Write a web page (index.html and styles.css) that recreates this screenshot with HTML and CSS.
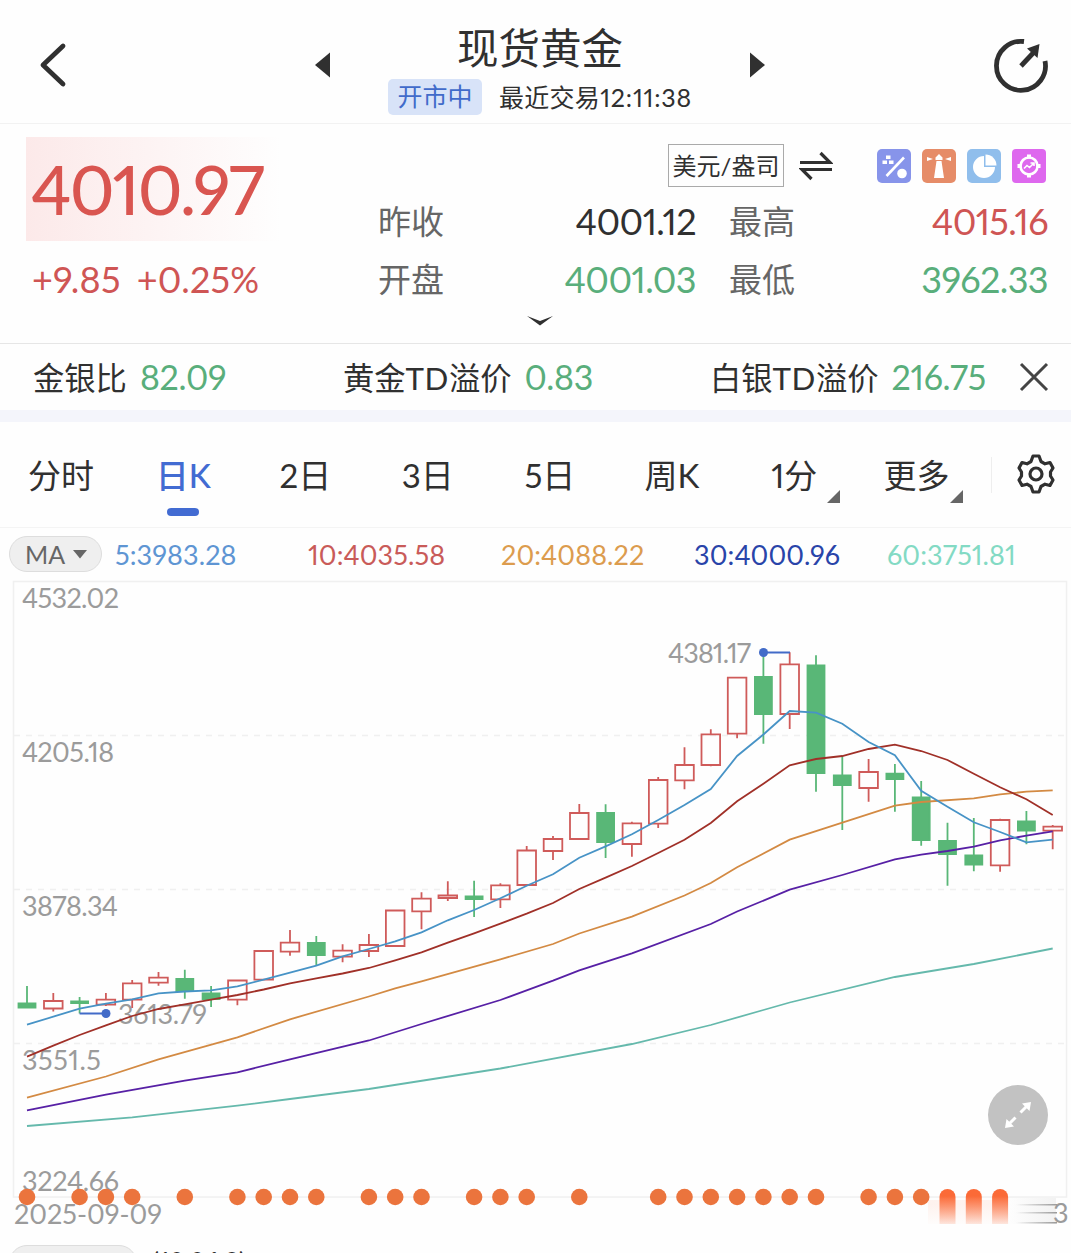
FILE: index.html
```html
<!DOCTYPE html>
<html lang="zh-CN">
<head>
    <meta charset="UTF-8">
    <meta name="viewport" content="width=device-width, initial-scale=1.0">
    <title>现货黄金</title>
    <link rel="stylesheet" href="styles.css">
</head>
<body>
    <header class="header">
        <svg class="back" width="30" height="48" viewBox="0 0 30 48"><path d="M25 5 L5 24 L25 43"/></svg>
        <svg class="arrow" width="16" height="26" viewBox="0 0 16 26"><path d="M16 0.500 V25.500 L1 13 Z"/></svg>
        <div class="title-box">
            <h1>现货黄金</h1>
            <div class="status">
                <span class="badge">开市中</span>
                <span class="last-time">最近交易<span class="clock">12:11:38</span></span>
            </div>
        </div>
        <svg class="arrow" width="16" height="26" viewBox="0 0 16 26"><path d="M0 0.500 V25.500 L15 13 Z"/></svg>
        <svg class="share" width="56" height="56" viewBox="0 0 56 56">
            <path class="ring" d="M31 4.500 A24.500 24.500 0 1 0 52 24"/>
            <path class="ring" d="M28 29 L42 14"/>
            <path class="tip" d="M46.500 7 L34 11.500 L44.500 21 Z"/>
        </svg>
    </header>

    <section class="quote">
        <div class="price-box">
            <div class="price">4010.97</div>
            <div class="change"><span>+9.85</span><span>+0.25%</span></div>
        </div>
        <div class="detail">
            <div class="tools">
                <span class="unit">美元/盎司</span>
                <svg class="swap" width="34" height="30" viewBox="0 0 34 30"><path d="M1 11.500 H31 L21.500 2 M33 18.500 H3 L12.500 28"/></svg>
                <div class="icons">
                    <svg width="34" height="34" viewBox="0 0 34 34">
                        <rect width="34" height="34" rx="5" fill="#8794ea"/>
                        <path d="M9.500 27 L27 8.500" stroke="#fff" stroke-width="2.600"/>
                        <circle cx="25" cy="24.500" r="4.800" fill="#fff"/>
                        <path d="M9 6.500h4.500v3.500H9z M5.500 11.500h4.500v3.500H5.500z M12 11.500h4.500v3.500H12z" fill="#fff"/>
                    </svg>
                    <svg width="34" height="34" viewBox="0 0 34 34">
                        <rect width="34" height="34" rx="5" fill="#e68c68"/>
                        <path d="M14.500 12 H19.500 L22 29 H12 Z M17 5 L20.500 8.500 V11 H13.500 V8.500 Z M5 8 L11 10 L5 12 Z M29 8 L23 10 L29 12 Z" fill="#fff"/>
                    </svg>
                    <svg width="34" height="34" viewBox="0 0 34 34">
                        <rect width="34" height="34" rx="5" fill="#90beec"/>
                        <path d="M17 7 A11 11 0 1 0 28 18 H17 Z" fill="#fff"/>
                        <path d="M18.500 5.500 A11 11 0 0 1 29.500 16.500 H18.500 Z" fill="#fff"/>
                    </svg>
                    <svg width="34" height="34" viewBox="0 0 34 34">
                        <rect width="34" height="34" rx="4" fill="#de68ee"/>
                        <circle cx="17" cy="17" r="8.500" fill="none" stroke="#fff" stroke-width="2.600"/>
                        <path d="M17 5.500v4 M17 24.500v4 M5.500 17h4 M24.500 17h4" stroke="#fff" stroke-width="4"/>
                        <path d="M12 19.500l3-3 2.500 2 4-4 M18.500 14h3.500v3" fill="none" stroke="#fff" stroke-width="1.600"/>
                    </svg>
                </div>
            </div>
            <div class="prices">
                <span class="label">昨收</span><span class="num">4001.12</span>
                <span class="label high">最高</span><span class="num red">4015.16</span>
                <span class="label">开盘</span><span class="num green">4001.03</span>
                <span class="label high">最低</span><span class="num green">3962.33</span>
            </div>
        </div>
        <svg class="more" width="28" height="12" viewBox="0 0 28 12"><path d="M1 1 L14 6 L27 1 L14 10.500 Z"/></svg>
    </section>

    <section class="ratios">
        <div class="ratio">金银比<span>82.09</span></div>
        <div class="ratio">黄金<i>TD</i>溢价<span>0.83</span></div>
        <div class="ratio">白银<i>TD</i>溢价<span>216.75</span></div>
        <svg class="close" width="30" height="30" viewBox="0 0 30 30"><path d="M2 2 L28 28 M28 2 L2 28"/></svg>
    </section>

    <nav class="tabs">
        <div class="tab">分时</div>
        <div class="tab active">日K</div>
        <div class="tab">2日</div>
        <div class="tab">3日</div>
        <div class="tab">5日</div>
        <div class="tab">周K</div>
        <div class="tab corner">1分</div>
        <div class="tab corner">更多</div>
        <div class="settings">
            <svg width="40" height="42" viewBox="0 0 40 42">
                <path d="M17 3 H23 L25 8.500 L29 10.800 L34 9.500 L37 15 L34.500 19 V23 L37 27 L34 32.500 L29 31.200 L25 33.500 L23 39 H17 L15 33.500 L11 31.200 L6 32.500 L3 27 L5.500 23 V19 L3 15 L6 9.500 L11 10.800 L15 8.500 Z"/>
                <circle cx="20" cy="21" r="6"/>
            </svg>
        </div>
    </nav>

    <div class="ma-bar">
        <div class="pill">MA<svg width="14" height="9" viewBox="0 0 14 9"><path d="M0 0 H14 L7 8.500 Z"/></svg></div>
        <div class="ma-list">
            <span class="ma5">5:3983.28</span>
            <span class="ma10">10:4035.58</span>
            <span class="ma20">20:4088.22</span>
            <span class="ma30">30:4000.96</span>
            <span class="ma60">60:3751.81</span>
        </div>
    </div>

    <main class="chart">
        <svg id="kline" width="1071" height="664" viewBox="0 580 1071 664">
            <defs>
                <linearGradient id="fadeDown" x1="0" y1="0" x2="0" y2="1">
                    <stop offset="0.2" stop-color="#fb6a37"/>
                    <stop offset="1" stop-color="#fb6a37" stop-opacity="0.15"/>
                </linearGradient>
                <linearGradient id="fadeRight" x1="0" y1="0" x2="1" y2="0">
                    <stop offset="0" stop-color="#999" stop-opacity="0"/>
                    <stop offset="1" stop-color="#999"/>
                </linearGradient>
            </defs>
        </svg>
        <button class="expand" aria-label="全屏">
            <svg width="30" height="30" viewBox="0 0 30 30">
                <path class="line" d="M17.500 12.500 L24 6 M12.500 17.500 L6 24"/>
                <path class="head" d="M28 2 L19 3.500 L26.500 11 Z M2 28 L3.500 19 L11 26.500 Z"/>
            </svg>
        </button>
    </main>

    <div class="sub-bar">
        <div class="sub-pill"></div>
        <span class="sub-params">(12,26,9)</span>
    </div>
    <script src="chart.js"></script>
</body>
</html>
```
FILE: styles.css
```css
* {
    box-sizing: border-box;
}

body {
    margin: 0;
    width: 1071px;
    height: 1253px;
    overflow: hidden;
    background: #fefefe;
    color: #303030;
    font-family: Lato, "Noto Sans CJK SC", sans-serif;
    font-variant-numeric: proportional-nums;
}

svg {
    display: block;
    flex: none;
}

/* Header */
.header {
    display: flex;
    align-items: center;
    height: 124px;
    padding: 6px 22px 0 38px;
    border-bottom: 1px solid #f2f2f2;
}

.back path,
.ring {
    fill: none;
    stroke: #303030;
    stroke-width: 4.8;
    stroke-linecap: round;
    stroke-linejoin: round;
}

.ring {
    stroke-linecap: butt;
}

.back {
    margin-right: 246px;
}

.arrow,
.tip,
.more {
    fill: #303030;
}

.title-box {
    width: 420px;
    padding-top: 3px;
    text-align: center;
}

.share {
    margin-left: auto;
}

h1 {
    margin: 0;
    font-size: 41.5px;
    font-weight: 400;
    line-height: 61px;
}

.status {
    display: flex;
    justify-content: center;
    align-items: center;
    gap: 17px;
    height: 36px;
    font-size: 25px;
}

.badge {
    width: 94px;
    height: 36px;
    line-height: 35px;
    border-radius: 5px;
    background: #d8e3f8;
    color: #416bca;
}

.last-time {
    line-height: 36px;
    letter-spacing: 0.3px;
}

.clock {
    letter-spacing: 0.8px;
}

/* Quote */
.quote {
    display: grid;
    grid-template-columns: 352px 1fr;
    grid-template-rows: 176px 1fr;
    height: 220px;
    padding: 13px 23px 0 26px;
    border-bottom: 1px solid #e6e6e6;
}

.price {
    width: 255px;
    height: 104px;
    padding-left: 5px;
    background: linear-gradient(90deg, #fce9e9, #fefefe);
    color: #d95550;
    font-size: 68px;
    font-weight: 500;
    line-height: 104px;
    letter-spacing: -2px;
}

.change {
    display: flex;
    gap: 16px;
    padding-left: 6px;
    color: #cf5554;
    font-size: 36px;
    line-height: 77px;
    letter-spacing: 0.2px;
}

.tools {
    display: flex;
    align-items: center;
    height: 57px;
    padding-left: 290px;
}

.unit {
    width: 116px;
    height: 43px;
    border: 1px solid #aaa;
    font-size: 24px;
    line-height: 41px;
    text-align: center;
    white-space: nowrap;
}

.swap {
    margin-left: 15px;
    fill: none;
    stroke: #303030;
    stroke-width: 3.2;
}

.icons {
    display: flex;
    gap: 11px;
    margin-left: auto;
    padding-right: 2px;
}

.prices {
    display: grid;
    grid-template-columns: 90px 228px 123px 1fr;
    grid-auto-rows: 58px;
    line-height: 54px;
}

.label {
    color: #666;
    font-size: 33px;
}

.high {
    padding-left: 33px;
}

.num {
    font-size: 36px;
    letter-spacing: -0.6px;
    text-align: right;
}

.red {
    color: #cf5554;
}

.green {
    color: #59ae7b;
}

.more {
    grid-column: 1 / 3;
    margin: 2px 0 0 500px;
}

/* Ratios */
.ratios {
    display: grid;
    grid-template-columns: 310px 367px 1fr 30px;
    align-items: center;
    height: 78px;
    padding: 0 22px 0 33px;
    border-bottom: 12px solid #f4f5fb;
}

.ratio {
    font-size: 31.3px;
    line-height: 64px;
    white-space: nowrap;
}

.ratio i {
    font-style: normal;
    letter-spacing: 0.5px;
}

.ratio span {
    margin-left: 13px;
    color: #59ae7b;
    font-size: 34px;
    letter-spacing: -0.3px;
}

.close {
    stroke: #444;
    stroke-width: 3;
}

/* Tabs */
.tabs {
    display: flex;
    height: 106px;
    border-bottom: 1px solid #f4f4f4;
}

.tab {
    position: relative;
    width: 122.2px;
    font-size: 33px;
    line-height: 107px;
    text-align: center;
}

.active {
    color: #426bd2;
    font-weight: 500;
}

.active::after {
    content: "";
    position: absolute;
    left: 45px;
    top: 86px;
    width: 32px;
    height: 8px;
    border-radius: 4px;
    background: #426bd2;
}

.corner::after {
    content: "";
    position: absolute;
    right: 15px;
    top: 68px;
    border-left: 13px solid transparent;
    border-bottom: 13px solid #666;
}

.settings {
    height: 36px;
    margin: 35px 0 0 13px;
    padding-left: 24px;
    border-left: 1px solid #eee;
}

.settings svg {
    margin-top: -4px;
    fill: none;
    stroke: #303030;
    stroke-width: 3.2;
    stroke-linejoin: round;
}

/* MA legend */
.ma-bar {
    display: flex;
    align-items: center;
    height: 52px;
    padding-left: 9px;
}

.pill {
    display: flex;
    flex: none;
    align-items: center;
    gap: 8px;
    width: 93px;
    height: 36px;
    padding-left: 15px;
    border: 1px solid #ddd;
    border-radius: 18px;
    background: #efefef;
    color: #666;
    font-size: 25px;
}

.pill svg {
    fill: #666;
}

.ma-list {
    display: grid;
    flex: none;
    grid-template-columns: repeat(5, 193px);
    margin-left: 13px;
    font-size: 27px;
    letter-spacing: 0.1px;
}

.ma5 { color: #5e95d3; }
.ma10 { color: #c95b59; }
.ma20 { color: #dc9c4e; }
.ma30 { color: #2944a9; }
.ma60 { color: #83dac4; }

/* Chart */
.chart {
    position: relative;
    height: 664px;
}

.frame {
    fill: none;
    stroke: #f0f0f0;
    stroke-width: 1.5;
}

.grid {
    stroke: #f0f0f0;
    stroke-width: 1.5;
    stroke-dasharray: 6 6;
}

.axis {
    fill: #9b9b9b;
    font-size: 27px;
}

.up {
    fill: none;
    stroke: #cf5b5a;
    stroke-width: 1.8;
}

.down {
    fill: #59b777;
    stroke: #59b777;
    stroke-width: 1.8;
}

.avg {
    fill: none;
    stroke-width: 1.8;
}

.line5 { stroke: #4793c6; }
.line10 { stroke: #a03028; }
.line20 { stroke: #d38a43; }
.line30 { stroke: #5720a5; }
.line60 { stroke: #65b9ac; }

.marker {
    fill: none;
    stroke: #426bc8;
    stroke-width: 1.8;
}

.marker-dot {
    fill: #426bc8;
}

.event {
    fill: #eb743d;
}

.expand {
    position: absolute;
    left: 988px;
    top: 505px;
    display: flex;
    align-items: center;
    justify-content: center;
    width: 60px;
    height: 60px;
    padding: 0;
    border: none;
    border-radius: 50%;
    background: #c2c2c2;
}

.expand .line {
    stroke: #fff;
    stroke-width: 3;
}

.expand .head {
    fill: #fff;
}

/* Next indicator, cut by the bottom of the screen */
.sub-bar {
    display: flex;
    height: 36px;
    padding: 1px 0 0 9px;
}

.sub-pill {
    width: 128px;
    height: 36px;
    border: 1px solid #ddd;
    border-radius: 18px;
    background: #efefef;
}

.sub-params {
    margin-left: 15px;
    font-size: 26px;
    line-height: 34px;
}
```
FILE: chart.js
```js
const svg = document.getElementById("kline");
const startX = 27;
const step = 26.3;

// [rising, high, body top, body bottom, low]
const candles = [
    [0, 986, 1003.5, 1007.5, 1008], [1, 993, 1001, 1008.5, 1011.5],
    [0, 997, 1001.5, 1003, 1013.5], [1, 993, 999.7, 1004.7, 1006],
    [1, 980, 983.3, 999.7, 1008], [1, 972, 977.7, 982.7, 985.7],
    [0, 969.7, 979, 991, 998.7], [0, 986, 993.5, 999, 1007],
    [1, 980, 980.5, 999.7, 1005.3], [1, 950.5, 951, 979.7, 980],
    [1, 930, 942.7, 951.7, 955.7], [0, 936, 943, 955, 965.7],
    [1, 944.3, 950.7, 956.7, 962.3], [1, 934, 945, 951, 957],
    [1, 910.5, 910.5, 946, 946], [1, 892.3, 898.7, 911.3, 929.3],
    [1, 881.3, 895.5, 898, 901], [0, 880.7, 896.5, 899, 917],
    [1, 883.3, 885.3, 899.3, 908], [1, 846, 850.5, 885, 886],
    [1, 836, 839, 851, 860], [1, 804, 813, 839, 840],
    [0, 804.3, 813, 842, 858], [1, 821.7, 823.3, 844, 856.7],
    [1, 777, 780, 823.7, 828], [1, 747.3, 765, 780.3, 789.3],
    [1, 729.3, 734.3, 765, 766.3], [1, 677, 677.7, 733.7, 738.3],
    [0, 653, 677, 714, 743.7], [1, 652.3, 664.3, 714, 729],
    [0, 655.3, 665.5, 773, 791.7], [0, 756, 775.5, 785, 830],
    [1, 759, 772, 788, 801.7], [0, 764, 773.7, 779, 811.7],
    [0, 781, 797.5, 840, 845.7], [0, 822.7, 841, 854, 885.7],
    [0, 818, 855.5, 864.5, 871.3], [1, 818.7, 820, 865.3, 871.7],
    [0, 811, 821.5, 830.5, 844.3], [1, 825, 826.7, 830.7, 849.3]
];

// index: y
const averages = {
    line60: {0: 1126, 4: 1117.3, 8: 1105.7, 10: 1099, 13: 1089, 18: 1068.5, 23: 1044, 26: 1025, 28: 1010, 29: 1002.5, 33: 977, 36: 964, 39: 948.5},
    line30: {0: 1110.3, 3: 1094.7, 6: 1080.7, 8: 1072.3, 10: 1059.3, 13: 1040.5, 15: 1024, 18: 1000, 20: 980.7, 21: 970.3, 23: 953.3, 26: 924, 27: 911.5, 29: 889.7, 31: 875, 33: 859.3, 34: 854.7, 35: 851, 36: 846.7, 37: 840.3, 38: 835.7, 39: 831.3},
    line20: {0: 1097.7, 3: 1076.5, 5: 1059.3, 8: 1037.3, 10: 1019.3, 13: 996.5, 14: 988.3, 15: 981.3, 18: 959.3, 20: 944, 21: 933.5, 23: 916.7, 25: 895.5, 26: 883, 27: 867.3, 29: 839.7, 31: 822.7, 33: 805.7, 34: 802, 36: 798.3, 37: 794.3, 38: 791.7, 39: 790.3},
    line10: [1056.7, 1045.7, 1035, 1025.3, 1016, 1009, 1004.3, 999.7, 995, 989.5, 983.3, 978.3, 973.5, 968, 960.3, 952.3, 942.7, 933.3, 923.7, 913.7, 903, 889, 877.7, 866, 853, 839.7, 823, 801.3, 783.7, 765.3, 759, 756, 749, 744.7, 751, 760, 773.7, 787.3, 799.3, 815],
    line5: [1024.7, 1016.7, 1008.7, 1003.7, 999.3, 993.3, 991.5, 990.3, 986.3, 979.7, 972.7, 965.7, 956.3, 949, 941.3, 932.3, 920.3, 910, 898.3, 885.7, 874.3, 857.7, 846.3, 834.3, 820, 805, 789, 756, 734.5, 711, 712.7, 723.7, 742, 755.3, 790.7, 806.7, 822.3, 832, 842.3, 839.7]
};

const events = [0, 2, 3, 4, 6, 8, 9, 10, 11, 13, 14, 15, 17, 18, 19, 21, 24, 25, 26, 27, 28, 29, 30, 32, 33, 34];
const smeared = [35, 36, 37];

function x(i) {
    return startX + i * step;
}

function text(px, py, width, value) {
    return `<text class="axis" x="${px}" y="${py}" textLength="${width}">${value}</text>`;
}

let out = '<rect class="frame" x="13.5" y="581.5" width="1053" height="615.5"/>';
[735.5, 889.5, 1043.5].forEach(y => {
    out += `<line class="grid" x1="14" y1="${y}" x2="1066" y2="${y}"/>`;
});

out += text(22, 608, 97, "4532.02");
out += text(22, 762, 92, "4205.18");
out += text(22, 916, 96, "3878.34");
out += text(22, 1070, 79, "3551.5");
out += text(22, 1191, 97, "3224.66");
out += text(14, 1224, 148, "2025-09-09");
out += text(668, 663, 83, "4381.17");
out += text(118, 1024, 89, "3613.79");
out += '<text class="axis" x="1053" y="1223">3</text>';

candles.forEach(([rising, high, top, bottom, low], i) => {
    const half = rising ? 9.3 : 8.5;
    out += `<path class="${rising ? "up" : "down"}" d="M${x(i)} ${high}V${top}M${x(i)} ${bottom}V${low}M${x(i) - half} ${top}h${half * 2}V${bottom}h${-half * 2}Z"/>`;
});

for (const name in averages) {
    const points = Object.entries(averages[name]).map(([i, y]) => `${x(+i)},${y}`);
    out += `<polyline class="avg ${name}" points="${points.join(" ")}"/>`;
}

// highest and lowest price
out += '<path class="marker" d="M763.5 652.5H790M79.6 1013.5H106"/>';
out += '<circle class="marker-dot" cx="763.5" cy="652.5" r="4.5"/><circle class="marker-dot" cx="106" cy="1013.5" r="4.5"/>';

events.forEach(i => {
    out += `<circle class="event" cx="${x(i)}" cy="1197" r="8.3"/>`;
});
out += '<rect x="928" y="1200" width="80" height="24" fill="url(#fadeDown)" opacity="0.08"/>';
smeared.forEach(i => {
    out += `<path fill="url(#fadeDown)" d="M${x(i) - 8} 1224V1197a8 8 0 0 1 16 0V1224Z"/>`;
});
[1204, 1212, 1222].forEach(y => {
    out += `<rect x="1016" y="${y}" width="41" height="1.5" fill="url(#fadeRight)"/>`;
});
out += '<rect x="1006" y="1198" width="50" height="26" fill="url(#fadeRight)" opacity="0.12"/>';

svg.innerHTML += out;
```
